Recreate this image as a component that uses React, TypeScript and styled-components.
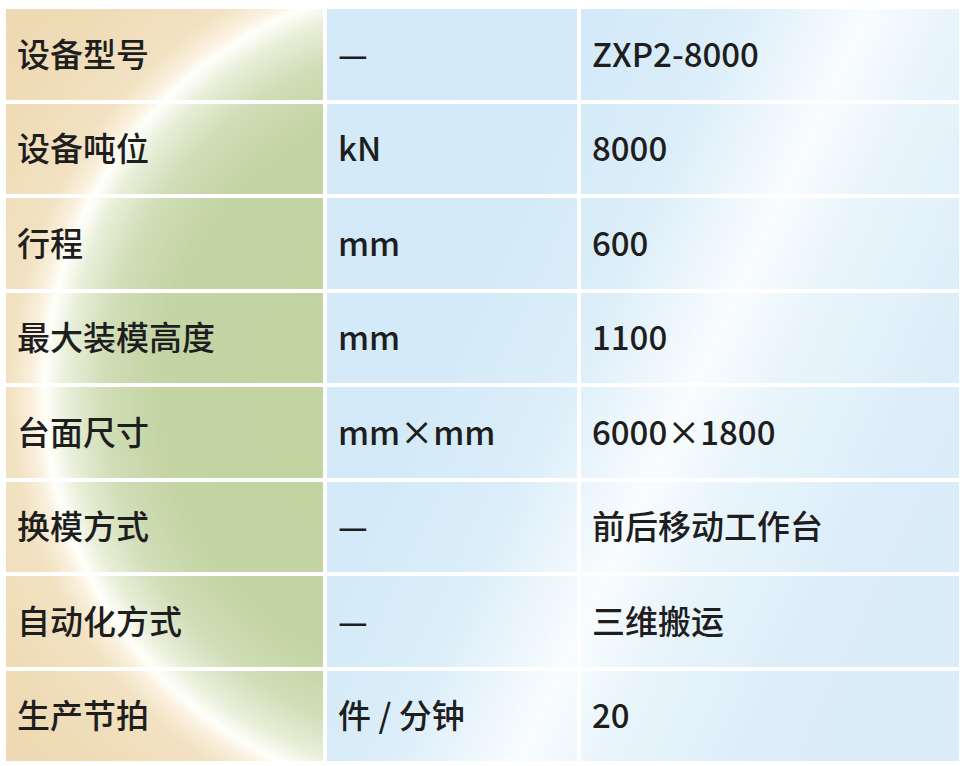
import React from 'react';
import styled, { createGlobalStyle, css } from 'styled-components';

const GlobalStyle = createGlobalStyle`
  html, body {
    margin: 0;
    padding: 0;
    background: #ffffff;
  }
  body {
    font-family: "Noto Sans CJK SC", "Noto Sans", sans-serif;
  }
`;

type Tone = 'label' | 'value';

const specs: [string, string, string][] = [
  ['设备型号', '—', 'ZXP2-8000'],
  ['设备吨位', 'kN', '8000'],
  ['行程', 'mm', '600'],
  ['最大装模高度', 'mm', '1100'],
  ['台面尺寸', 'mm×mm', '6000×1800'],
  ['换模方式', '—', '前后移动工作台'],
  ['自动化方式', '—', '三维搬运'],
  ['生产节拍', '件 / 分钟', '20'],
];

// the glow is one picture spread over all cells, so the gradients are pinned to the viewport
const labelBackground = css`
  background-color: #c4d5a4;
  background-image: radial-gradient(
    circle at 455px 390px,
    #c1d2a0 0px,
    #c4d5a5 300px,
    #d0ddb6 350px,
    #e8eed8 388px,
    #fffffa 410px,
    #f9efdb 424px,
    #f2e2c2 445px,
    #efdbb6 520px,
    #ecd7b1 620px
  );
  background-attachment: fixed;
`;

const valueBackground = css`
  background-color: #d4eaf8;
  background-image: linear-gradient(
    115deg,
    #d2e9f7 0%,
    #d4eaf8 46%,
    #dbeef9 56%,
    #f9fcfe 66%,
    #e9f5fb 72%,
    #dcedf9 84%,
    #d9ecf8 100%
  );
  background-attachment: fixed;
`;

const Table = styled.div`
  display: grid;
  grid-template-columns: 317px 250px 378px;
  grid-auto-rows: 90.5px;
  column-gap: 4px;
  row-gap: 4px;
  padding: 9px 8px 5px 6px;
`;

const Cell = styled.div<{ $tone: Tone }>`
  display: flex;
  align-items: center;
  padding: 0 10px 3px 11px;
  font-size: 33px;
  font-weight: 500;
  color: #1e1e1e;
  white-space: nowrap;
  ${(p) => (p.$tone === 'label' ? labelBackground : valueBackground)}
`;

export default function App() {
  return (
    <>
      <GlobalStyle />
      <Table>
        {specs.map(([name, unit, value]) => (
          <React.Fragment key={name}>
            <Cell $tone="label">{name}</Cell>
            <Cell $tone="value">{unit}</Cell>
            <Cell $tone="value">{value}</Cell>
          </React.Fragment>
        ))}
      </Table>
    </>
  );
}
